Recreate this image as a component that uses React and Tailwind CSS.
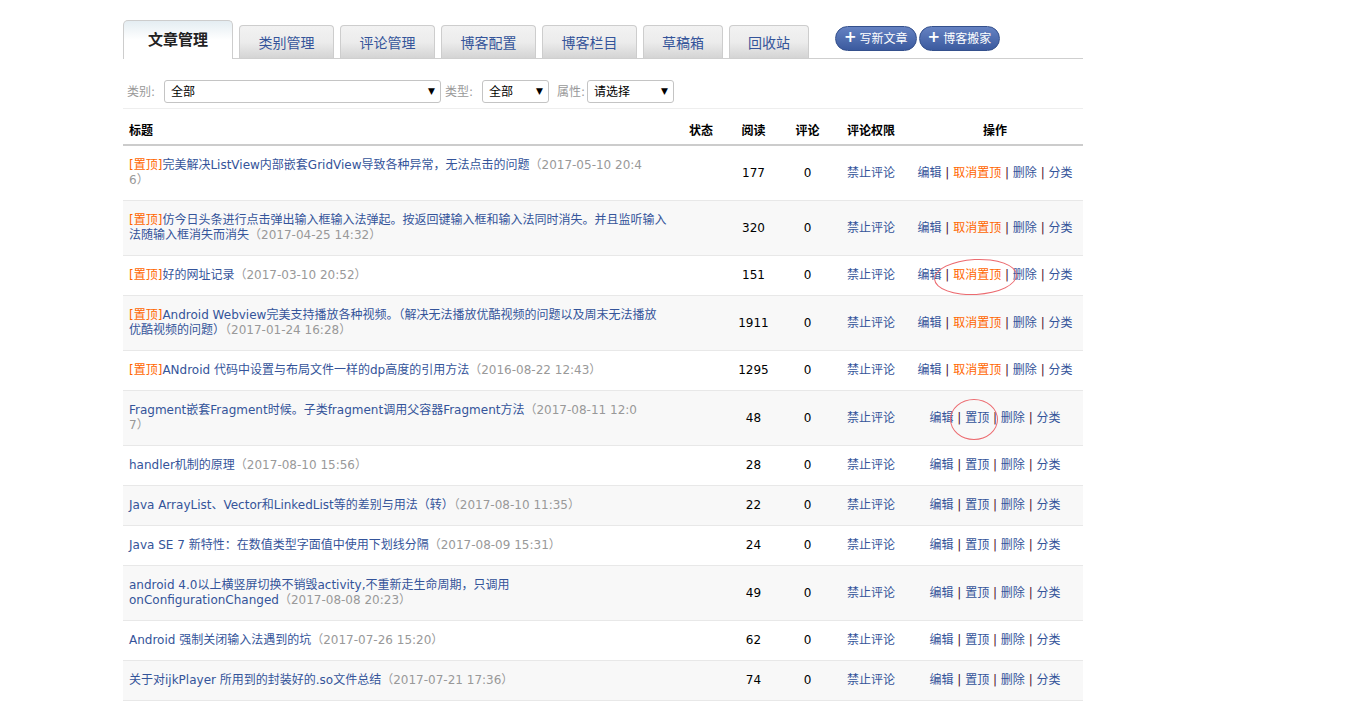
import React from 'react';

const tabs = [
  { label: '类别管理', w: 'w-[95px]' },
  { label: '评论管理', w: 'w-[95px]' },
  { label: '博客配置', w: 'w-[95px]' },
  { label: '博客栏目', w: 'w-[95px]' },
  { label: '草稿箱', w: 'w-[80px]' },
  { label: '回收站', w: 'w-[80px]' },
];

const articles = [
  { top: true, title: '完美解决ListView内部嵌套GridView导致各种异常，无法点击的问题', date: '（2017-05-10 20:4\n6）', read: 177 },
  { top: true, title: '仿今日头条进行点击弹出输入框输入法弹起。按返回键输入框和输入法同时消失。并且监听输入\n法随输入框消失而消失', date: '（2017-04-25 14:32）', read: 320 },
  { top: true, title: '好的网址记录', date: '（2017-03-10 20:52）', read: 151, mark: 'wide' },
  { top: true, title: 'Android Webview完美支持播放各种视频。（解决无法播放优酷视频的问题以及周末无法播放\n优酷视频的问题）', date: '（2017-01-24 16:28）', read: 1911 },
  { top: true, title: 'ANdroid 代码中设置与布局文件一样的dp高度的引用方法', date: '（2016-08-22 12:43）', read: 1295 },
  { title: 'Fragment嵌套Fragment时候。子类fragment调用父容器Fragment方法', date: '（2017-08-11 12:0\n7）', read: 48, mark: 'round' },
  { title: 'handler机制的原理', date: '（2017-08-10 15:56）', read: 28 },
  { title: 'Java ArrayList、Vector和LinkedList等的差别与用法（转）', date: '（2017-08-10 11:35）', read: 22 },
  { title: 'Java SE 7 新特性：在数值类型字面值中使用下划线分隔', date: '（2017-08-09 15:31）', read: 24 },
  { title: 'android 4.0以上横竖屏切换不销毁activity,不重新走生命周期，只调用\nonConfigurationChanged', date: '（2017-08-08 20:23）', read: 49 },
  { title: 'Android 强制关闭输入法遇到的坑', date: '（2017-07-26 15:20）', read: 62 },
  { title: '关于对ijkPlayer 所用到的封装好的.so文件总结', date: '（2017-07-21 17:36）', read: 74 },
];

const Select = ({ value, w }) => (
  <div className={`${w} h-[23px] flex items-center justify-between pl-[6px] pr-[5px] border border-[#c4c4c4] rounded-[3px] bg-white text-[12px] text-black`}>
    <span>{value}</span>
    <span className="text-[9px] leading-none">▼</span>
  </div>
);

const Sep = () => <span className="text-[#4a1030]"> | </span>;

const AddButton = ({ children }) => (
  <button className="h-[25px] px-[8px] flex items-center gap-[3px] rounded-full border border-[#34508c] bg-gradient-to-b from-[#6582c2] to-[#3b5a9e] text-white text-[12px] leading-none">
    <span className="text-[15px] font-bold leading-none -mt-[2px]">+</span>
    {children}
  </button>
);

export default function App() {
  return (
    <div className="min-h-[714px] bg-white font-['DejaVu_Sans','Noto_Sans_CJK_SC',sans-serif] text-[12px] text-black">
      <div className="ml-[123px] w-[960px] pt-[21px]">
        {/* tab bar */}
        <div className="flex items-end h-[38px] border-b border-[#cfcfcf]">
          <div className="w-[110px] h-[39px] -mb-px flex items-center justify-center pt-[1px] rounded-t-[5px] border border-b-0 border-[#cdcdcd] bg-gradient-to-b from-[#e4edf2] via-white to-white text-[15px] font-bold text-[#222]">
            文章管理
          </div>
          {tabs.map((t) => (
            <div
              key={t.label}
              className={`${t.w} ml-[6px] h-[33px] flex items-center justify-center pt-[2px] rounded-t-[4px] border border-b-0 border-[#cdcdcd] bg-gradient-to-b from-[#f2f2f2] via-[#ececec] to-[#d4d4d4] text-[14px] text-[#34549a]`}
            >
              {t.label}
            </div>
          ))}
          <div className="self-start mt-[5px] ml-[26px] flex gap-[2px]">
            <AddButton>写新文章</AddButton>
            <AddButton>博客搬家</AddButton>
          </div>
        </div>

        {/* filters */}
        <div className="flex items-center pt-[21px] pb-[5px] border-b border-[#eeeeee] text-[#999]">
          <span className="ml-[4px] w-[37px]">类别:</span>
          <Select value="全部" w="w-[277px]" />
          <span className="ml-[4px] w-[37px]">类型:</span>
          <Select value="全部" w="w-[67px]" />
          <span className="ml-[8px] w-[30px]">属性:</span>
          <Select value="请选择" w="w-[87px]" />
        </div>

        {/* article table */}
        <table className="w-[960px] table-fixed border-collapse">
          <colgroup>
            <col className="w-[552px]" />
            <col className="w-[52px]" />
            <col className="w-[53px]" />
            <col className="w-[55px]" />
            <col className="w-[72px]" />
            <col className="w-[176px]" />
          </colgroup>
          <thead>
            <tr className="border-b-2 border-[#cccccc] font-bold leading-[15px]">
              <th className="pl-[6px] pt-[15px] pb-[5px] text-left">标题</th>
              <th className="pt-[15px] pb-[5px]">状态</th>
              <th className="pt-[15px] pb-[5px]">阅读</th>
              <th className="pt-[15px] pb-[5px]">评论</th>
              <th className="pt-[15px] pb-[5px]">评论权限</th>
              <th className="pt-[15px] pb-[5px]">操作</th>
            </tr>
          </thead>
          <tbody>
            {articles.map((a, i) => (
              <tr key={i} className={`border-b border-[#e8e8e8] leading-[15px] ${i % 2 === 1 ? 'bg-[#f8f8f8]' : 'bg-white'}`}>
                <td className="pl-[6px] py-3 whitespace-pre text-[#34549a]">
                  {a.top && <span className="text-[#f60]">[置顶]</span>}
                  {a.title}
                  <span className="text-[#999]">{a.date}</span>
                </td>
                <td className="py-3" />
                <td className="py-3 text-center">{a.read}</td>
                <td className="py-3 text-center">0</td>
                <td className="py-3 text-center text-[#34549a]">禁止评论</td>
                <td className="py-3 text-center text-[#34549a] whitespace-nowrap">
                  编辑<Sep />
                  {a.top ? (
                    <span className="relative text-[#f60]">
                      取消置顶
                      {a.mark === 'wide' && (
                        <span className="absolute left-[-19px] top-[-9px] w-[83px] h-[36px] rounded-[50%] border border-[#ec6b70] -rotate-3" />
                      )}
                    </span>
                  ) : (
                    <span className="relative">
                      置顶
                      {a.mark === 'round' && (
                        <span className="absolute left-[-15px] top-[-12px] w-[48px] h-[41px] rounded-[50%] border border-[#ec6b70]" />
                      )}
                    </span>
                  )}
                  <Sep />删除<Sep />分类
                </td>
              </tr>
            ))}
          </tbody>
        </table>
      </div>
    </div>
  );
}
